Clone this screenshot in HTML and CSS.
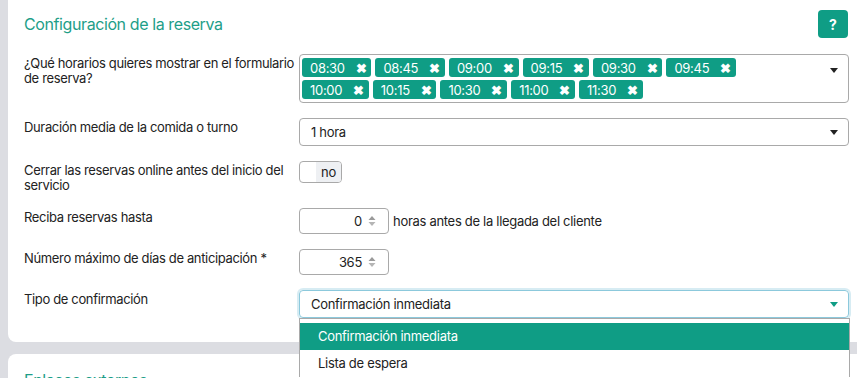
FILE: index.html
```html
<!DOCTYPE html>
<html lang="es">
<head>
    <meta charset="UTF-8">
    <meta name="viewport" content="width=device-width, initial-scale=1.0">
    <title>Configuración de la reserva</title>
    <link rel="stylesheet" href="styles.css">
</head>
<body>

    <!-- Booking settings -->
    <section class="card">
        <div class="card-header">
            <h2>Configuración de la reserva</h2>
            <button class="help-btn" type="button">?</button>
        </div>

        <div class="form-grid">
            <label class="field-label">¿Qué horarios quieres mostrar en el formulario de reserva?</label>
            <div class="multi-select">
                <div class="tags">
                    <span class="tag">08:30 <b>✖</b></span>
                    <span class="tag">08:45 <b>✖</b></span>
                    <span class="tag">09:00 <b>✖</b></span>
                    <span class="tag">09:15 <b>✖</b></span>
                    <span class="tag">09:30 <b>✖</b></span>
                    <span class="tag">09:45 <b>✖</b></span>
                    <span class="tag">10:00 <b>✖</b></span>
                    <span class="tag">10:15 <b>✖</b></span>
                    <span class="tag">10:30 <b>✖</b></span>
                    <span class="tag">11:00 <b>✖</b></span>
                    <span class="tag">11:30 <b>✖</b></span>
                </div>
                <span class="caret"></span>
            </div>

            <label class="field-label">Duración media de la comida o turno</label>
            <div class="select">
                <span>1 hora</span>
                <span class="caret"></span>
            </div>

            <label class="field-label">Cerrar las reservas online antes del inicio del servicio</label>
            <div>
                <div class="toggle"><span class="toggle-off"></span><span class="toggle-label">no</span></div>
            </div>

            <label class="field-label">Reciba reservas hasta</label>
            <div class="inline-field">
                <div class="number-input">
                    <span>0</span>
                    <svg class="spinner" width="8" height="14" viewBox="0 0 8 14">
                        <path d="M0.5 6 L4 2 L7.5 6 Z" fill="#9a9a9a"/>
                        <path d="M0.5 8 L4 12 L7.5 8 Z" fill="#b5b5b5"/>
                    </svg>
                </div>
                <span>horas antes de la llegada del cliente</span>
            </div>

            <label class="field-label">Número máximo de días de anticipación *</label>
            <div>
                <div class="number-input">
                    <span>365</span>
                    <svg class="spinner" width="8" height="14" viewBox="0 0 8 14">
                        <path d="M0.5 6 L4 2 L7.5 6 Z" fill="#9a9a9a"/>
                        <path d="M0.5 8 L4 12 L7.5 8 Z" fill="#b5b5b5"/>
                    </svg>
                </div>
            </div>

            <label class="field-label">Tipo de confirmación</label>
            <div class="dropdown-wrap">
                <div class="select is-open">
                    <span>Confirmación inmediata</span>
                    <span class="caret"></span>
                </div>
                <ul class="dropdown">
                    <li class="active">Confirmación inmediata</li>
                    <li>Lista de espera</li>
                </ul>
            </div>
        </div>
    </section>

    <!-- External links -->
    <section class="card">
        <div class="card-header">
            <h2>Enlaces externos</h2>
        </div>
    </section>

</body>
</html>
```

FILE: styles.css
```css
/* Global Styles */
* {
    margin: 0;
    padding: 0;
    box-sizing: border-box;
    font-family: 'Inter', 'Liberation Sans', sans-serif;
}

body {
    background: #dcdde2;
    color: #222;
    font-size: 13px;
    letter-spacing: -0.3px;
    overflow: hidden;
    height: 378px;
}

/* CARD */
.card {
    background: #ffffff;
    margin: -10px -12px 12px 8px;
    padding: 20px 20px 24px 16px;
    border-radius: 8px;
}

.card + .card {
    margin-top: 0;
    padding-top: 12px;
}

.card-header {
    display: flex;
    justify-content: space-between;
    align-items: center;
    height: 28px;
    margin-bottom: 16px;
}

.card-header h2 {
    font-size: 16px;
    font-weight: 400;
    letter-spacing: -0.4px;
    color: #1e9e88;
}

.help-btn {
    width: 30px;
    height: 28px;
    border: none;
    border-radius: 4px;
    background: #0f9d85;
    color: #fff;
    font-weight: 700;
    font-size: 14px;
    margin-right: 1px;
}

/* FORM GRID */
.form-grid {
    display: grid;
    grid-template-columns: 275px 1fr;
    row-gap: 15px;
    align-items: start;
}

.field-label {
    line-height: 15px;
    padding-top: 2px;
    letter-spacing: -0.35px;
}

/* MULTI SELECT */
.multi-select {
    display: flex;
    justify-content: space-between;
    border: 1px solid #a9a9a9;
    border-radius: 4px;
    padding: 3px 10px 3px 2px;
}

.tags {
    display: flex;
    flex-wrap: wrap;
    gap: 3px 4px;
    width: 470px;
}

.tag {
    display: inline-flex;
    align-items: center;
    height: 19px;
    padding: 0 5px 0 8px;
    background: #0f9d85;
    color: #fff;
    border-radius: 3px;
    font-size: 13px;
}

.tag b {
    font-size: 13px;
    margin-left: 11px;
}

.caret {
    width: 0;
    height: 0;
    border-left: 4px solid transparent;
    border-right: 4px solid transparent;
    border-top: 5px solid #222;
    margin-top: 10px;
}

/* SELECT */
.select {
    display: flex;
    justify-content: space-between;
    align-items: center;
    height: 28px;
    border: 1px solid #a9a9a9;
    border-radius: 4px;
    padding: 0 10px 0 11px;
}

.select .caret {
    margin-top: 0;
}

.select.is-open {
    border-color: #8cc9dc;
    box-shadow: 0 0 0 2px rgba(140, 201, 220, 0.35);
}

.select.is-open .caret {
    border-top-color: #0f9d85;
}

/* TOGGLE */
.toggle {
    display: inline-flex;
    height: 22px;
    border: 1px solid #a9a9a9;
    border-radius: 4px;
    overflow: hidden;
}

.toggle-off {
    width: 16px;
}

.toggle-label {
    background: #eef0f3;
    padding: 0 5px 0 5px;
    line-height: 20px;
}

/* NUMBER INPUT */
.inline-field {
    display: flex;
    align-items: center;
    gap: 4px;
}

.number-input {
    display: flex;
    justify-content: flex-end;
    align-items: center;
    gap: 6px;
    width: 90px;
    height: 26px;
    border: 1px solid #a9a9a9;
    border-radius: 4px;
    padding-right: 12px;
}

/* DROPDOWN */
.dropdown-wrap {
    position: relative;
}

.dropdown {
    position: absolute;
    top: 28px;
    left: 0;
    right: -1px;
    list-style: none;
    background: #fff;
    border: 1px solid #a9a9a9;
    border-bottom: none;
    padding-top: 4px;
    z-index: 5;
}

.dropdown li {
    height: 27px;
    line-height: 27px;
    padding-left: 18px;
}

.dropdown li.active {
    background: #0f9d85;
    color: #fff;
}
```
